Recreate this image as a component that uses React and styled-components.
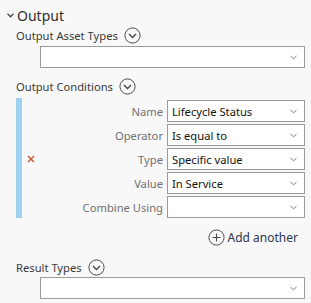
import React from "react"
import styled, { createGlobalStyle } from "styled-components"

const Global = createGlobalStyle`
  body {
    margin: 0;
    background: #f8f8f8;
    font-family: "Noto Sans", "Open Sans", sans-serif;
  }
`

function CircleChevron() {
  return (
    <svg width="17" height="17" viewBox="0 0 17 17">
      <circle cx="8.5" cy="8.5" r="7.6" fill="none" stroke="#4a4a4a" strokeWidth="1" />
      <path d="M5 7 L8.5 10.5 L12 7" fill="none" stroke="#4a4a4a" strokeWidth="1.4" />
    </svg>
  )
}

function Caret() {
  return (
    <svg width="7" height="5" viewBox="0 0 7 5">
      <path d="M0.5 1 L3.5 3.8 L6.5 1" fill="none" stroke="#777" strokeWidth="1" />
    </svg>
  )
}

function Select({ value }) {
  return (
    <SelectBox>
      <span>{value}</span>
      <Caret />
    </SelectBox>
  )
}

const fields = [
  { label: "Name", value: "Lifecycle Status" },
  { label: "Operator", value: "Is equal to" },
  { label: "Type", value: "Specific value", remove: true },
  { label: "Value", value: "In Service" },
  { label: "Combine Using", value: "" },
]

export default function App() {
  return (
    <>
      <Global />
      <Panel>
        <Header>
          <svg width="7" height="5" viewBox="0 0 7 5">
            <path d="M0.5 0.8 L3.5 3.8 L6.5 0.8" fill="none" stroke="#444" strokeWidth="1.3" />
          </svg>
          <span>Output</span>
        </Header>

        <SectionLabel>
          <span>Output Asset Types</span>
          <CircleChevron />
        </SectionLabel>
        <WideSelect><Select value="" /></WideSelect>

        <SectionLabel $top={9}>
          <span>Output Conditions</span>
          <CircleChevron />
        </SectionLabel>
        <Conditions>
          {fields.map((f) => (
            <React.Fragment key={f.label}>
              <Remove>
                {f.remove && (
                  <svg width="8" height="8" viewBox="0 0 8 8">
                    <path d="M1 1 L7 7 M7 1 L1 7" stroke="#cf5a3c" strokeWidth="1.5" />
                  </svg>
                )}
              </Remove>
              <FieldLabel>{f.label}</FieldLabel>
              <Select value={f.value} />
            </React.Fragment>
          ))}
        </Conditions>

        <AddRow>
          <svg width="17" height="17" viewBox="0 0 17 17">
            <circle cx="8.5" cy="8.5" r="7.6" fill="none" stroke="#4a4a4a" strokeWidth="1" />
            <path d="M8.5 4.5 V12.5 M4.5 8.5 H12.5" stroke="#4a4a4a" strokeWidth="1.1" />
          </svg>
          <span>Add another</span>
        </AddRow>

        <SectionLabel $top={12}>
          <span>Result Types</span>
          <CircleChevron />
        </SectionLabel>
        <WideSelect $top={0}><Select value="" /></WideSelect>
      </Panel>
    </>
  )
}

const Panel = styled.div`
  width: 311px;
  height: 303px;
  padding-top: 6px;
  box-sizing: border-box;
`

const Header = styled.div`
  display: flex;
  align-items: center;
  gap: 3px;
  height: 18px;
  padding-left: 7px;
  font-size: 14px;
  color: #2f2f2f;
`

const SectionLabel = styled.div`
  display: flex;
  align-items: center;
  gap: 6px;
  height: 19px;
  margin-top: ${(p) => p.$top ?? 2}px;
  padding-left: 16px;
  font-size: 11.2px;
  color: #3a3a3a;
`

const WideSelect = styled.div`
  margin: ${(p) => p.$top ?? 1}px 6px 0 40px;
`

const SelectBox = styled.div`
  display: flex;
  align-items: center;
  justify-content: space-between;
  height: 22px;
  box-sizing: border-box;
  padding: 0 7px 0 4px;
  background: #fff;
  border: 1px solid #9a9a9a;
  font-size: 11.2px;
  color: #111;
`

const Conditions = styled.div`
  display: grid;
  grid-template-columns: 18px 1fr 138px;
  grid-auto-rows: 22px;
  row-gap: 2px;
  align-items: center;
  margin: 2px 6px 0 16px;
  padding-top: 2px;
  border-left: 6px solid #9fd2f1;
`

const Remove = styled.span`
  display: flex;
  justify-content: center;
`

const FieldLabel = styled.span`
  text-align: right;
  padding-right: 4px;
  font-size: 11.2px;
  color: #707070;
`

const AddRow = styled.div`
  display: flex;
  align-items: center;
  justify-content: flex-end;
  gap: 3px;
  height: 18px;
  margin: 10px 13px 0 0;
  font-size: 12px;
  color: #2b3450;
`
